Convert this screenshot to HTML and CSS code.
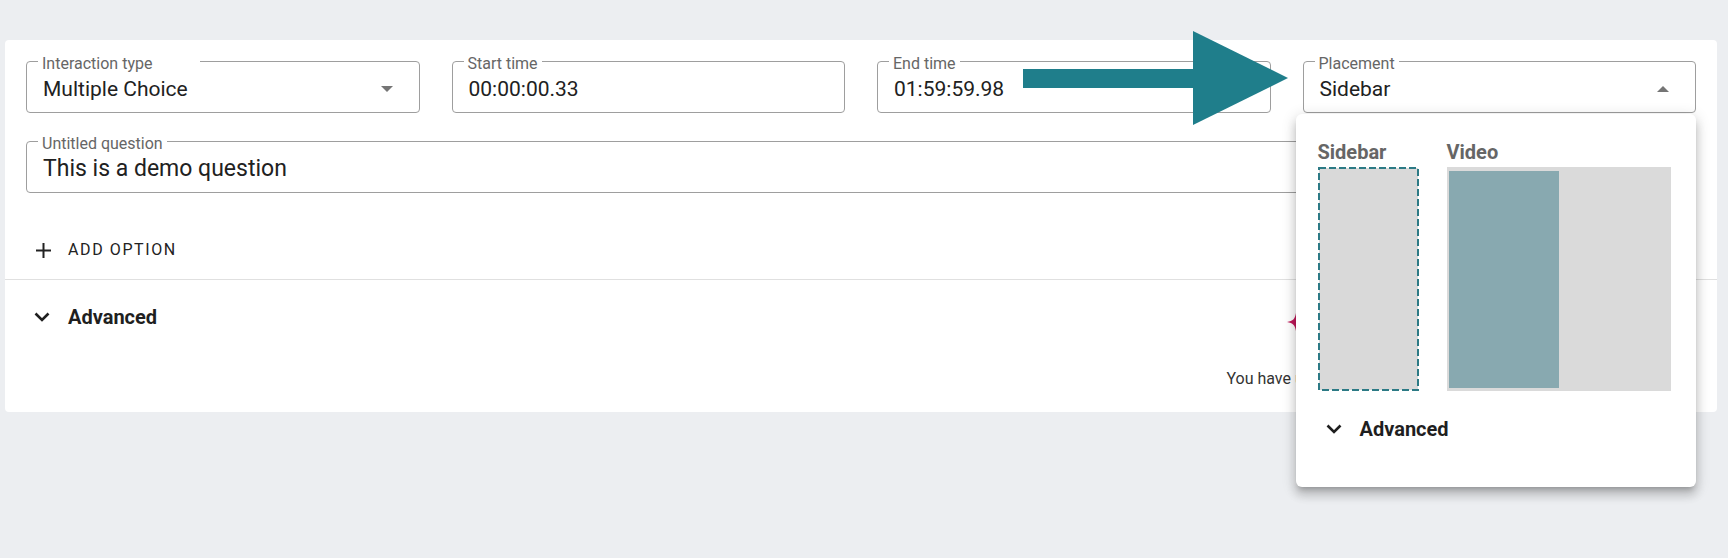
FILE: index.html
```html
<!DOCTYPE html>
<html>
<head>
<meta charset="utf-8">
<link rel="stylesheet" href="styles.css">
</head>
<body>
<div class="page">
  <div class="card">
    <div class="card-top">
      <div class="row4">
        <fieldset class="field">
          <legend class="legend legend-wide">Interaction type</legend>
          <div class="value"><span>Multiple Choice</span>
            <svg class="caret" width="12" height="6" viewBox="0 0 12 6"><path d="M0 0 L12 0 L6 6 Z" fill="#757575"/></svg>
          </div>
        </fieldset>
        <fieldset class="field">
          <legend class="legend">Start time</legend>
          <div class="value"><span>00:00:00.33</span></div>
        </fieldset>
        <fieldset class="field">
          <legend class="legend">End time</legend>
          <div class="value"><span>01:59:59.98</span></div>
        </fieldset>
        <div class="placement">
          <fieldset class="field">
            <legend class="legend">Placement</legend>
            <div class="value"><span>Sidebar</span>
              <svg class="caret" width="12" height="6" viewBox="0 0 12 6"><path d="M0 6 L12 6 L6 0 Z" fill="#757575"/></svg>
            </div>
          </fieldset>
          <div class="menu">
            <div class="menu-options">
              <div class="opt">
                <div class="opt-label">Sidebar</div>
                <svg class="sidebar-box" width="101" height="224" viewBox="0 0 101 224">
                  <rect x="1" y="1" width="99" height="222" fill="#d9d9d9" stroke="#2c7a85" stroke-width="2" stroke-dasharray="7 3"/>
                </svg>
              </div>
              <div class="opt">
                <div class="opt-label">Video</div>
                <div class="video-box"><div class="video-fill"></div></div>
              </div>
            </div>
            <div class="adv menu-adv">
              <svg class="chev" width="16" height="10" viewBox="0 0 16 10"><path d="M1.5 1.5 L8 8 L14.5 1.5" fill="none" stroke="#1f1f1f" stroke-width="2.6"/></svg>
              <span class="adv-text">Advanced</span>
            </div>
          </div>
        </div>
      </div>
      <fieldset class="field field-q">
        <legend class="legend">Untitled question</legend>
        <div class="value value-q"><span>This is a demo question</span></div>
      </fieldset>
      <div class="add-row">
        <button class="add-btn">
          <svg width="15" height="15" viewBox="0 0 15 15"><path d="M7.5 0 V15 M0 7.5 H15" stroke="#222" stroke-width="2"/></svg>
          <span>ADD OPTION</span>
        </button>
      </div>
    </div>
    <div class="divider"></div>
    <div class="card-bottom">
      <div class="adv">
        <svg class="chev" width="16" height="10" viewBox="0 0 16 10"><path d="M1.5 1.5 L8 8 L14.5 1.5" fill="none" stroke="#1f1f1f" stroke-width="2.6"/></svg>
        <span class="adv-text">Advanced</span>
        <div class="adv-extra">
          <svg width="18" height="18" viewBox="0 0 18 18"><path d="M9 0 C10 6 12 8 18 9 C12 10 10 12 9 18 C8 12 6 10 0 9 C6 8 8 6 9 0 Z" fill="#c2185b"/></svg>
        </div>
      </div>
      <div class="footer">
        <span class="notice">You have unsaved changes</span>
        <button class="save-btn">SAVE</button>
      </div>
    </div>
  </div>
  <svg class="arrow" width="266" height="95" viewBox="0 0 266 95">
    <rect x="0" y="38" width="172" height="19" fill="#1f7e8b"/>
    <path d="M170 0 L265 47 L170 94 Z" fill="#1f7e8b"/>
  </svg>
</div>
</body>
</html>
```

FILE: styles.css
```css
* { box-sizing: border-box; }
html, body { margin: 0; padding: 0; }
body {
  background: #eceef1;
  font-family: Roboto, "Liberation Sans", Arial, sans-serif;
  color: #212121;
  width: 1728px;
  height: 558px;
  overflow: hidden;
}
.page {
  position: relative;
  padding: 40px 11px 0 5px;
}
.card {
  background: #fff;
  border-radius: 4px;
  width: 1712px;
  height: 372px;
}
.card-top {
  padding: 11px 21px 0 21px;
}
.row4 {
  display: grid;
  grid-template-columns: repeat(4, 1fr);
  column-gap: 32px;
}
.field {
  margin: 0;
  padding: 0 16px;
  border: 1px solid #9e9e9e;
  border-radius: 4px;
  min-width: 0;
}
.legend {
  font-size: 16px;
  line-height: 16px;
  padding: 5px 4px 0;
  margin-left: -5px;
  color: #666;
}
.legend-wide { padding-right: 48px; }
.value {
  margin: 5px 0 11px;
  height: 24px;
  line-height: 24px;
  font-size: 21px;
  color: #212121;
  display: flex;
  align-items: center;
  justify-content: space-between;
}
.value-q { font-size: 23px; }
.caret { margin-right: 10px; }
.field-q { margin-top: 18px; }
.placement { position: relative; }
.add-row {
  padding: 41px 0 13px 10px;
}
.add-btn {
  display: flex;
  align-items: center;
  gap: 17px;
  background: none;
  border: 0;
  padding: 6px 0;
  font-family: inherit;
  font-size: 16px;
  font-weight: 400;
  letter-spacing: 1.6px;
  line-height: 20px;
  color: #222;
}
.divider {
  height: 1px;
  background: #e0e0e0;
}
.card-bottom {
  padding: 25px 21px 13px 21px;
}
.adv {
  display: flex;
  align-items: center;
  height: 24px;
  padding-left: 8px;
}
.chev { margin-right: 18px; }
.adv-text {
  font-size: 20px;
  font-weight: 700;
  line-height: 24px;
  color: #1f1f1f;
}
.adv-extra {
  margin-left: auto;
  width: 409px;
  height: 18px;
  margin-top: 10px;
}
.footer {
  margin-top: 28px;
  display: flex;
  justify-content: flex-end;
  align-items: center;
  gap: 16px;
}
.notice {
  font-size: 16px;
  color: #333;
}
.save-btn {
  width: 261px;
  height: 42px;
  border: 0;
  border-radius: 4px;
  background: #1f6e78;
  color: #fff;
  font-family: inherit;
  font-size: 15px;
  font-weight: 500;
}
.menu {
  position: absolute;
  top: 63px;
  left: -7px;
  width: 400px;
  height: 373px;
  background: #fff;
  border-radius: 6px;
  box-shadow: 0 5px 5px -3px rgba(0,0,0,0.2), 0 8px 10px 1px rgba(0,0,0,0.14), 0 3px 14px 2px rgba(0,0,0,0.12);
  padding: 26px 25px 0 22px;
  z-index: 2;
}
.menu-options {
  display: flex;
  gap: 28px;
}
.opt-label {
  font-size: 20px;
  font-weight: 700;
  line-height: 24px;
  color: #666;
  margin-bottom: 3px;
}
.sidebar-box { display: block; }
.video-box {
  width: 224px;
  height: 224px;
  background: #dadada;
  padding: 4px 0 3px 2px;
}
.video-fill {
  width: 110px;
  height: 100%;
  background: #88a9b0;
}
.menu-adv {
  margin-top: 26px;
  padding-left: 8px;
}
.arrow {
  position: absolute;
  left: 1023px;
  top: 31px;
  z-index: 3;
}
```
